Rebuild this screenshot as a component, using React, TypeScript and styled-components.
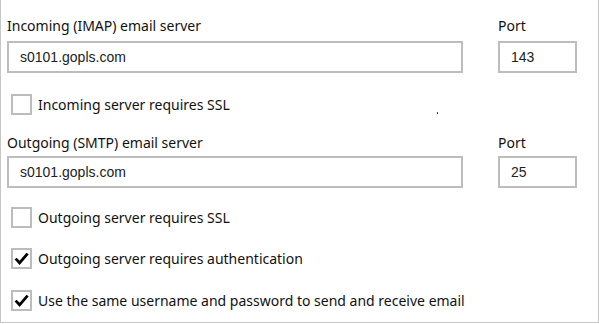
import React from 'react';
import styled, { createGlobalStyle } from 'styled-components';

const GlobalStyle = createGlobalStyle`
  html, body {
    margin: 0;
    padding: 0;
    background: #ffffff;
  }
  body {
    font-family: "Noto Sans", "Open Sans", sans-serif;
  }
`;

const Panel = styled.div`
  box-sizing: border-box;
  width: 599px;
  height: 323px;
  border: 1px solid #c6c6c6;
  border-top: none;
  padding: 16px 0 0 6px;
  color: #111111;
  font-size: 14px;
`;

const ServerRow = styled.div<{ $top: number }>`
  display: grid;
  grid-template-columns: 456px 79px;
  column-gap: 35px;
  margin-top: ${p => p.$top}px;
`;

const Field = styled.div`
  display: flex;
  flex-direction: column;
  gap: 4px;
`;

const Label = styled.div<{ $h: number }>`
  line-height: 20px;
  height: ${p => p.$h}px;
  white-space: nowrap;
`;

const TextBox = styled.input`
  box-sizing: border-box;
  width: 100%;
  height: 32px;
  border: 2px solid #bdbdbd;
  padding: 0 11px;
  font-family: "Liberation Sans", Arial, sans-serif;
  font-size: 14px;
  color: #222222;
  background: #ffffff;
  outline: none;
  margin: 0;
`;

const CheckRow = styled.label<{ $top: number }>`
  display: flex;
  align-items: center;
  gap: 6px;
  margin-top: ${p => p.$top}px;
  padding-left: 4px;
  height: 21px;
  white-space: nowrap;
`;

const Box = styled.span`
  box-sizing: border-box;
  width: 21px;
  height: 21px;
  border: 2px solid #bcbcbc;
  display: flex;
  align-items: center;
  justify-content: center;
  flex-shrink: 0;
`;

const Dot = styled.span`
  width: 1px;
  height: 2px;
  background: #444;
  margin-left: 201px;
  align-self: flex-end;
  margin-bottom: 1px;
`;

const Check: React.FC = () => (
  <svg width="15" height="15" viewBox="0 0 15 15">
    <path d="M1.6 7.6 L5.6 11.8 L13.6 2.6" fill="none" stroke="#000" strokeWidth="2.8" strokeLinejoin="miter" />
  </svg>
);

const CheckItem: React.FC<{ checked?: boolean; top: number; children: React.ReactNode; extra?: React.ReactNode }> = ({ checked, top, children, extra }) => (
  <CheckRow $top={top}>
    <Box>{checked && <Check />}</Box>
    {children}
    {extra}
  </CheckRow>
);

const Server: React.FC<{ label: string; host: string; port: string; top?: number; labelH?: number }> = ({ label, host, port, top = 0, labelH = 21 }) => (
  <ServerRow $top={top}>
    <Field>
      <Label $h={labelH}>{label}</Label>
      <TextBox defaultValue={host} readOnly />
    </Field>
    <Field>
      <Label $h={labelH}>Port</Label>
      <TextBox defaultValue={port} readOnly />
    </Field>
  </ServerRow>
);

const App: React.FC = () => (
  <>
    <GlobalStyle />
    <Panel>
      <Server label="Incoming (IMAP) email server" host="s0101.gopls.com" port="143" />
      <CheckItem top={21} extra={<Dot />}>Incoming server requires SSL</CheckItem>
      <Server label="Outgoing (SMTP) email server" host="s0101.gopls.com" port="25" top={18} labelH={19} />
      <CheckItem top={19}>Outgoing server requires SSL</CheckItem>
      <CheckItem checked top={20}>Outgoing server requires authentication</CheckItem>
      <CheckItem checked top={21}>Use the same username and password to send and receive email</CheckItem>
    </Panel>
  </>
);

export default App;
